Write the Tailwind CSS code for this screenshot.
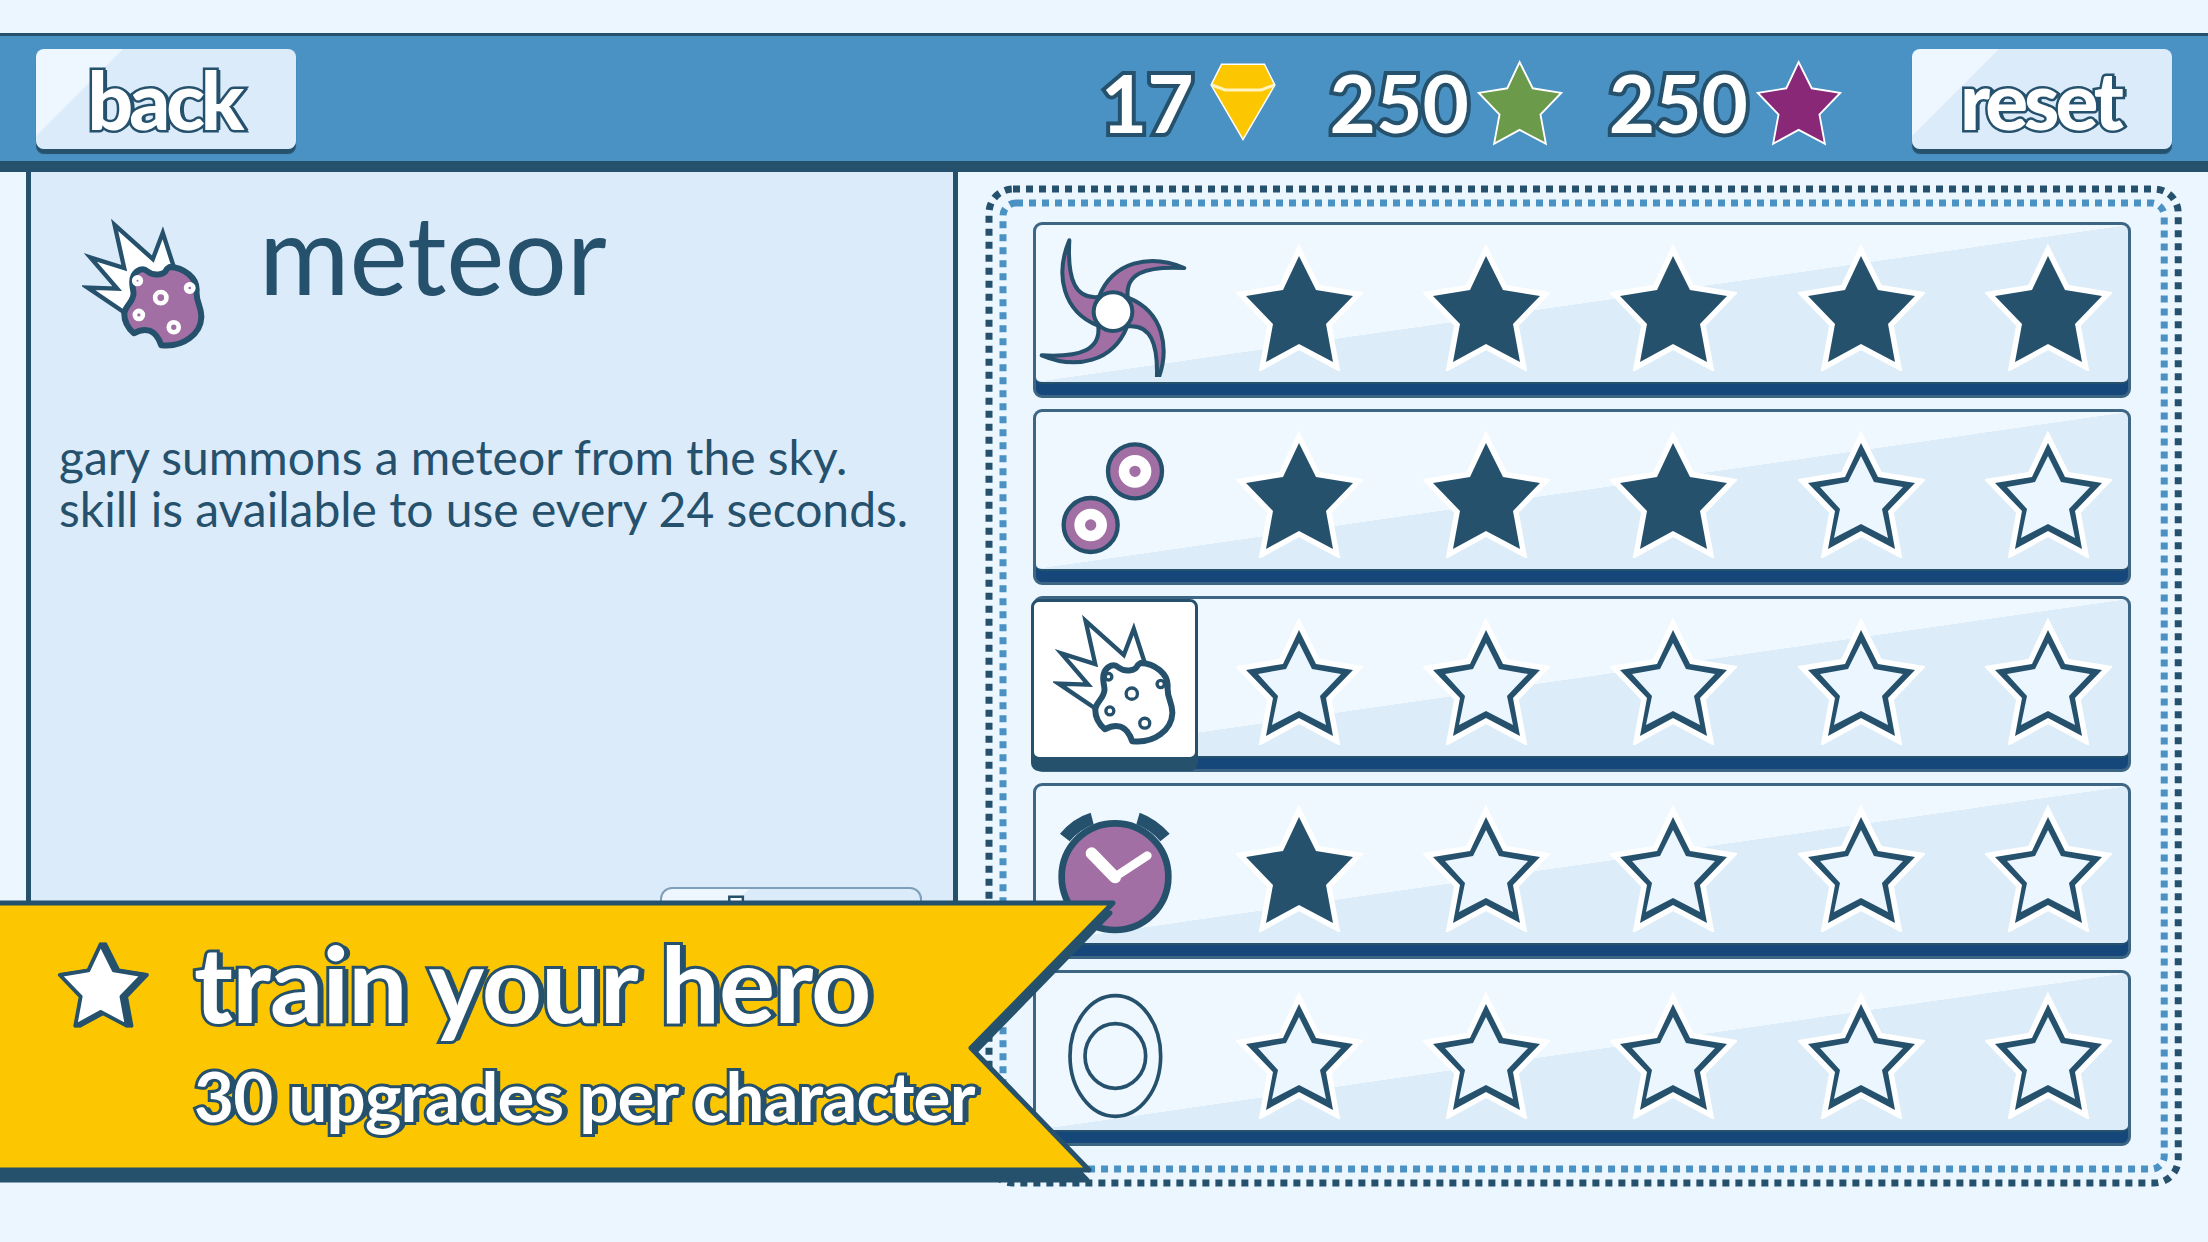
<!DOCTYPE html>
<html lang="en">
  <head>
    <meta charset="UTF-8" />
    <meta name="viewport" content="width=device-width, initial-scale=1.0" />
    <title>Train your hero</title>
    <script src="https://cdn.jsdelivr.net/npm/@tailwindcss/browser@4"></script>
  </head>
  <body class="bg-[#ecf6ff] font-[Lato,sans-serif] text-[#25516d]">
    <!-- shared shapes -->
    <svg class="hidden">
      <symbol id="star" viewBox="0 0 127 127">
        <polygon points="63,12 80,46 117,52 90,80 97,118 63,100 30,118 37,80 10,52 47,46" />
      </symbol>
      <symbol id="star-full" viewBox="0 0 127 127">
        <polygon points="63,12 80,46 117,52 90,80 97,118 63,100 30,118 37,80 10,52 47,46" fill="#25516d" stroke="#fff" stroke-width="11" stroke-miterlimit="10" paint-order="stroke" />
      </symbol>
      <symbol id="star-empty" viewBox="0 0 127 127">
        <polygon points="63,12 80,46 117,52 90,80 97,118 63,100 30,118 37,80 10,52 47,46" fill="#25516d" stroke="#fff" stroke-width="11" stroke-miterlimit="10" paint-order="stroke" />
        <polygon points="63,25 76,51 105,56 84,78 90,107 63,93 36,107 42,78 22,56 50,51" fill="#ecf6ff" />
      </symbol>
      <symbol id="meteor" viewBox="95 75 370 390">
        <path d="M217 352 L112 281 L201 284 L120 190 L222 222 L193 92 L308 195 L338 116 L370 215 L300 330 Z" fill="#fff" stroke="#25516d" stroke-width="13" stroke-miterlimit="10" />
        <path d="M358 219 C402 220 441 252 440 288 C436 325 455 335 454 370 C452 420 400 462 333 454 C328 436 313 410 290 409 C275 407 265 411 251 418 C230 400 222 382 222 358 C225 335 247 328 250 300 C250 282 240 265 250 245 C260 226 280 220 290 231 C310 247 343 245 350 225 Z" stroke="#25516d" stroke-width="18" stroke-linejoin="round" />
        <g stroke="currentColor">
          <circle cx="262" cy="260" r="10" />
          <circle cx="419" cy="282" r="11" />
          <circle cx="332" cy="311" r="17" />
          <circle cx="266" cy="363" r="12" />
          <circle cx="371" cy="400" r="15" />
        </g>
      </symbol>
      <symbol id="shuriken" viewBox="49 42 480 456">
        <g transform="translate(280 302)" fill="#a16fa3" stroke="#25516d" stroke-width="12" stroke-linejoin="round">
          <path d="M-131 -214 C-175 -110 -150 0 -45 42 L-45 -44 C-110 -38 -138 -90 -131 -214 Z" />
          <path d="M-131 -214 C-175 -110 -150 0 -45 42 L-45 -44 C-110 -38 -138 -90 -131 -214 Z" transform="rotate(90)" />
          <path d="M-131 -214 C-175 -110 -150 0 -45 42 L-45 -44 C-110 -38 -138 -90 -131 -214 Z" transform="rotate(180)" />
          <path d="M-131 -214 C-175 -110 -150 0 -45 42 L-45 -44 C-110 -38 -138 -90 -131 -214 Z" transform="rotate(270)" />
          <circle r="58" fill="#fff" />
        </g>
      </symbol>
      <symbol id="orbs" viewBox="49 42 480 456">
        <g fill="#a16fa3">
          <circle cx="346" cy="220" r="81" stroke="#25516d" stroke-width="13" />
          <circle cx="346" cy="220" r="33" stroke="#fff" stroke-width="32" />
          <circle cx="213" cy="381" r="81" stroke="#25516d" stroke-width="13" />
          <circle cx="213" cy="381" r="33" stroke="#fff" stroke-width="32" />
        </g>
      </symbol>
      <symbol id="clock" viewBox="49 587 480 456">
        <path d="M121 730 Q160 683 213 667 L222 702 Q180 718 150 753 Z M360 667 Q410 685 450 730 L422 753 Q392 718 350 702 Z" fill="#25516d" />
        <circle cx="286" cy="859" r="160" fill="#a16fa3" stroke="#25516d" stroke-width="20" />
        <g fill="none" stroke="#fff" stroke-linecap="round">
          <path d="M216 789 L286 861" stroke-width="36" />
          <path d="M290 857 L383 796" stroke-width="26" />
        </g>
      </symbol>
      <symbol id="ring" viewBox="9 9 480 456">
        <g fill="none" stroke="#25516d" stroke-width="11">
          <ellipse cx="247" cy="258" rx="136" ry="181" />
          <ellipse cx="247" cy="258" rx="91" ry="97" />
        </g>
      </symbol>
    </svg>

    <div class="relative flex min-h-screen flex-col pt-[33px] pb-[55px]">
      <header class="flex items-start justify-between border-t-3 border-b-11 border-[#25516d] bg-[#4a92c4] px-9">
        <button type="button" class="mt-[13px] mb-3 h-[100px] w-[260px] rounded-lg bg-[linear-gradient(135deg,#eef6ff_61px,#dcebfa_62px)] pr-1 text-[80px] leading-[92px] font-black tracking-tighter text-white shadow-[0_5px_1px_#25516d] [-webkit-text-stroke:5px_#25516d] [paint-order:stroke_fill] [text-shadow:2px_0_#25516d,4px_0_#25516d]">back</button>
        <div class="flex items-start">
          <div class="mt-4 flex h-[100px] items-center text-[80px] leading-[100px] font-bold text-white [-webkit-text-stroke:8px_#25516d] [paint-order:stroke_fill]">
            <span>17</span>
            <svg class="ml-4 h-[78px] w-[66px]" viewBox="0 0 66 78" fill="#fcc600" stroke="#fff" stroke-width="3">
              <path d="M12 2 H54 L64 22 L33 75 L2 22 Z" />
              <path d="M2 22 L15 27 H51 L64 22" fill="none" stroke="#fff3c0" />
            </svg>
            <span class="ml-[54px]">250</span>
            <svg class="ml-2 h-[88px] w-[86px] fill-[#6b9a4b] stroke-white stroke-5" viewBox="5 4 117 119"><use href="#star" width="127" height="127" /></svg>
            <span class="ml-[46px]">250</span>
            <svg class="ml-2 h-[88px] w-[86px] fill-[#8a2878] stroke-white stroke-5" viewBox="5 4 117 119"><use href="#star" width="127" height="127" /></svg>
          </div>
          <button type="button" class="mt-[13px] mb-3 ml-[70px] h-[100px] w-[260px] rounded-lg bg-[linear-gradient(135deg,#eef6ff_61px,#dcebfa_62px)] pr-1 text-[80px] leading-[92px] font-black tracking-tighter text-white shadow-[0_5px_1px_#25516d] [-webkit-text-stroke:5px_#25516d] [paint-order:stroke_fill] [text-shadow:2px_0_#25516d,4px_0_#25516d]">reset</button>
        </div>
      </header>

      <main class="flex flex-1">
        <section class="mb-4 ml-[26px] flex w-[42.2%] flex-col border-x-5 border-[#25516d] bg-[#dcebfa] pt-7">
          <div class="flex items-start">
            <svg class="mt-[19px] ml-[51px] h-[130px] w-[123px] fill-[#a16fa3] stroke-14 text-white" viewBox="0 0 123 130"><use href="#meteor" width="123" height="130" /></svg>
            <h1 class="ml-[54px] text-[110px] leading-[104px]">meteor</h1>
          </div>
          <p class="mt-[82px] ml-7 text-[48px] leading-[52px]">gary summons a meteor from the sky.<br />skill is available to use every 24 seconds.</p>
          <button type="button" class="mt-auto mr-[31px] mb-[184px] h-[100px] w-[262px] self-end rounded-xl border-2 border-[#7d9fb9] bg-[linear-gradient(135deg,#eef6ff_61px,#dcebfa_62px)] pr-2 pb-5 text-[80px] leading-[72px] font-black tracking-tighter text-white [-webkit-text-stroke:5px_#25516d] [paint-order:stroke_fill]">buy</button>
        </section>

        <section class="relative mt-[13px] mr-[26px] ml-[27px] flex-1 pt-[37px] pr-[51px] pb-[41px] pl-12">
          <svg class="absolute top-1 left-1 h-[calc(100%-8px)] w-[calc(100%-8px)] overflow-visible" fill="none" stroke="#25516d" stroke-width="7" stroke-dasharray="7 6">
            <rect width="100%" height="100%" rx="24" />
          </svg>
          <svg class="absolute top-[18px] left-[18px] h-[calc(100%-36px)] w-[calc(100%-36px)] overflow-visible" fill="none" stroke="#4a92c4" stroke-width="7" stroke-dasharray="7 6">
            <rect width="100%" height="100%" rx="13" />
          </svg>
          <div id="skills" class="relative flex flex-col gap-[11px]"></div>
        </section>
      </main>

      <!-- banner -->
      <div class="absolute bottom-[57px] left-0 h-[285px] w-[1120px]">
        <svg class="absolute inset-0 size-full" viewBox="0 0 1120 285" stroke="#25516d" stroke-width="5" stroke-linejoin="round">
          <path d="M-10 13 H1110 L969 158 L1087 280 H-10 Z" fill="#25516d" />
          <path d="M-10 3 H1113 L971 148 L1089 270 H-10 Z" fill="#fcc600" />
        </svg>
        <div class="relative flex">
          <svg class="mt-[39px] ml-[56px] h-[92px] w-[94px]" viewBox="5 6 122 118" stroke="#25516d" stroke-width="5" stroke-linejoin="round">
            <use href="#star" x="6" width="127" height="127" fill="#25516d" />
            <use href="#star" x="3" width="127" height="127" fill="#25516d" />
            <use href="#star" width="127" height="127" fill="#fff" />
          </svg>
          <div class="ml-11 font-bold tracking-tighter whitespace-nowrap text-white [-webkit-text-stroke:6px_#25516d] [paint-order:stroke_fill] [text-shadow:3px_0_#25516d,6px_0_#25516d]">
            <h2 class="mt-4 text-[105px] leading-[132px]">train your hero</h2>
            <p class="text-[69px] leading-[96px]">30 upgrades per character</p>
          </div>
        </div>
      </div>
    </div>

    <script>
      const skills = [
        { name: "shuriken", level: 5 },
        { name: "orbs", level: 3 },
        { name: "meteor", level: 0, selected: true },
        { name: "clock", level: 1 },
        { name: "ring", level: 0 },
      ];

      function iconHTML(skill) {
        if (skill.selected) {
          return `
      <button type="button" aria-label="${skill.name}" class="-ml-[5px] flex h-[161px] w-[167px] items-center justify-center rounded-lg border-3 border-[#25516d] bg-white shadow-[0_11px_#25516d]">
        <svg class="h-[130px] w-[123px] fill-white stroke-10 text-[#25516d]" viewBox="0 0 123 130"><use href="#meteor" width="123" height="130" /></svg>
      </button>`;
        }
        return `
      <button type="button" aria-label="${skill.name}" class="w-[162px] self-start">
        <svg class="h-[152px] w-[160px]"><use href="#${skill.name}" /></svg>
      </button>`;
      }

      function displaySkills() {
        let html = "";

        skills.forEach(function (skill) {
          let stars = "";
          for (let i = 0; i < 5; i++) {
            const star = i < skill.level ? "star-full" : "star-empty";
            stars += `<svg class="size-[127px]"><use href="#${star}" /></svg>`;
          }

          html += `
      <div class="h-[176px] rounded-[9px] border-3 border-[#3d6684] bg-[#15477a]">
        <div class="flex h-[159px] rounded-md border-b-2 border-[#25516d] bg-[linear-gradient(to_bottom_right,#eff7ff_50%,#dcecf8_50%)]">
          ${iconHTML(skill)}
          <div class="mr-4 ml-[38px] flex flex-1 items-center justify-between pt-2">${stars}</div>
        </div>
      </div>`;
        });

        document.getElementById("skills").innerHTML = html;
      }

      displaySkills();
    </script>
  </body>
</html>
